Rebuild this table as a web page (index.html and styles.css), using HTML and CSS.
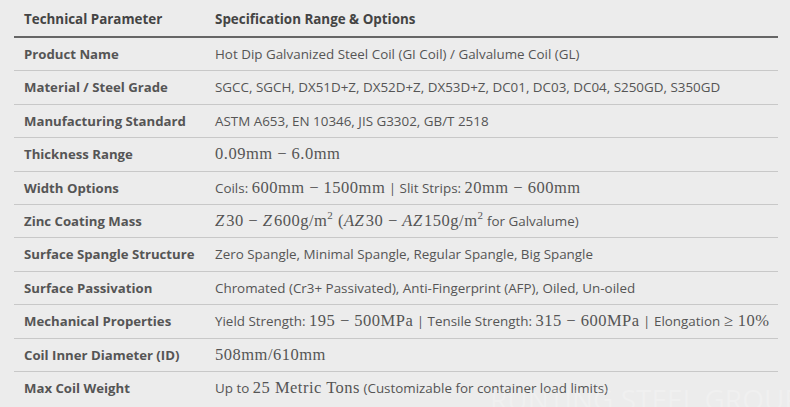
FILE: index.html
```html
<!DOCTYPE html>
<html>
<head>
<meta charset="utf-8">
<link rel="stylesheet" href="styles.css">
</head>
<body>
<div class="wrap">
<table class="spec">
<colgroup><col class="col1"><col class="col2"></colgroup>
<thead>
<tr><th>Technical Parameter</th><th>Specification Range &amp; Options</th></tr>
</thead>
<tbody>
<tr><td class="c1">Product Name</td><td>Hot Dip Galvanized Steel Coil (GI Coil) / Galvalume Coil (GL)</td></tr>
<tr><td class="c1">Material / Steel Grade</td><td>SGCC, SGCH, DX51D+Z, DX52D+Z, DX53D+Z, DC01, DC03, DC04, S250GD, S350GD</td></tr>
<tr><td class="c1">Manufacturing Standard</td><td>ASTM A653, EN 10346, JIS G3302, GB/T 2518</td></tr>
<tr><td class="c1">Thickness Range</td><td><span class="m">0.09mm − 6.0mm</span></td></tr>
<tr><td class="c1">Width Options</td><td>Coils: <span class="m">600mm − 1500mm</span> | Slit Strips: <span class="m">20mm − 600mm</span></td></tr>
<tr><td class="c1">Zinc Coating Mass</td><td><span class="m"><i>Z</i>30 − <i>Z</i>600g/m<sup>2</sup> (<i>AZ</i>30 − <i>AZ</i>150g/m<sup>2</sup></span> for Galvalume)</td></tr>
<tr><td class="c1">Surface Spangle Structure</td><td>Zero Spangle, Minimal Spangle, Regular Spangle, Big Spangle</td></tr>
<tr><td class="c1">Surface Passivation</td><td>Chromated (Cr3+ Passivated), Anti-Fingerprint (AFP), Oiled, Un-oiled</td></tr>
<tr><td class="c1">Mechanical Properties</td><td>Yield Strength: <span class="m">195 − 500MPa</span> | Tensile Strength: <span class="m">315 − 600MPa</span> | Elongation <span class="m">≥ 10%</span></td></tr>
<tr><td class="c1">Coil Inner Diameter (ID)</td><td><span class="m">508mm/610mm</span></td></tr>
<tr><td class="c1">Max Coil Weight</td><td>Up to <span class="m">25 Metric Tons</span> (Customizable for container load limits)</td></tr>
</tbody>
</table>
<div class="watermark">RUNTING STEEL GROUP</div>
</div>
</body>
</html>
```
FILE: styles.css
```css
html, body {
  margin: 0;
  padding: 0;
  background: #ececec;
  overflow: hidden;
}
body {
  font-family: "Open Sans", "Noto Sans", sans-serif;
  font-size: 13.4px;
  color: #555;
}
.wrap {
  position: relative;
  padding: 0 12px 0 14px;
  height: 407px;
  overflow: hidden;
}
.spec {
  width: 764px;
  border-collapse: collapse;
  table-layout: fixed;
}
.col1 {
  width: 191px;
}
.spec th {
  text-align: left;
  font-weight: 700;
  color: #444;
  padding: 10px 10px 7px;
  line-height: 19px;
  border-bottom: 2px solid #666;
}
.spec td {
  padding: 7px 10px;
  line-height: 18.4px;
  border-bottom: 1px solid #c8c8c8;
  white-space: nowrap;
}
.spec td.c1 {
  font-weight: 700;
  font-size: 13.2px;
  color: #555;
}
.spec tbody tr:last-child td {
  border-bottom: none;
}
.m {
  font-family: "Liberation Serif", "DejaVu Serif", serif;
  font-size: 16.5px;
  letter-spacing: 0.5px;
  line-height: 1;
  color: #555;
}
.m i {
  font-style: italic;
  padding-right: 1.5px;
}
.m sup {
  font-size: 11px;
  line-height: 0;
  vertical-align: 7px;
}
.watermark {
  position: absolute;
  left: 490px;
  top: 380px;
  font-family: "Open Sans", sans-serif;
  font-size: 28px;
  color: rgba(255,255,255,0.22);
  white-space: nowrap;
  pointer-events: none;
}
```
